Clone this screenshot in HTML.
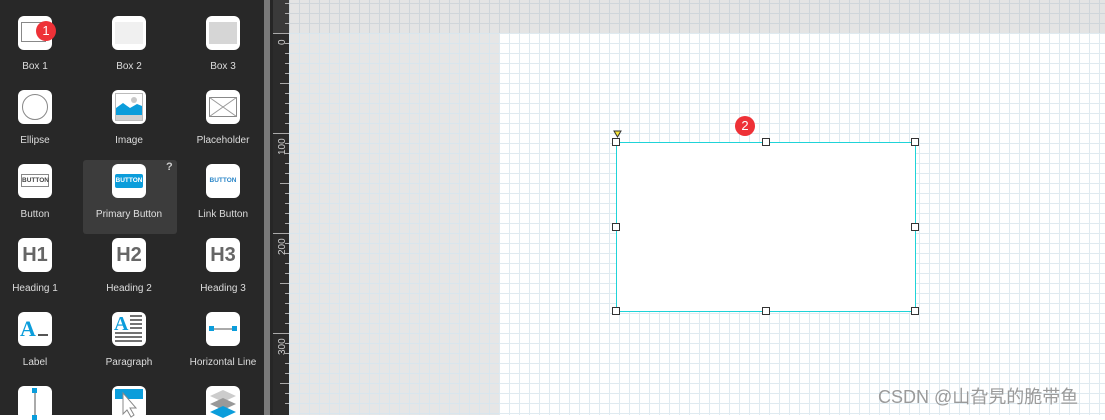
<!DOCTYPE html>
<html><head><meta charset="utf-8"><style>
*{margin:0;padding:0;box-sizing:border-box}
body{width:1105px;height:415px;overflow:hidden;position:relative;background:#fff;font-family:"Liberation Sans",sans-serif}
#side{position:absolute;left:0;top:0;width:264px;height:415px;background:#282828}
#sb1{position:absolute;left:264px;top:0;width:6px;height:415px;background:#7a7a7a}
#sb2{position:absolute;left:270px;top:0;width:3px;height:415px;background:#262626}
.it{position:absolute;width:94px;text-align:center;color:#ddd;font-size:10px}
.ic{position:absolute;width:34px;height:34px;background:#fff;border-radius:6px;left:30px;top:0;overflow:hidden}
.lb{position:absolute;top:45px;left:0;width:94px}
#hl{position:absolute;left:83px;top:160px;width:94px;height:74px;background:#3c3c3c;border-radius:3px}
#top{position:absolute;left:289px;top:0;width:816px;height:33px;background-color:#e4e4e4;
background-image:linear-gradient(90deg,#cfd6db 1px,transparent 1px),linear-gradient(#cfd6db 1px,transparent 1px);background-size:10px 10px;background-position:10px 3px}
#gray{position:absolute;left:289px;top:33px;width:210px;height:382px;background-color:#e6e6e6;
background-image:linear-gradient(90deg,#d8e6ee 1px,transparent 1px),linear-gradient(#d8e6ee 1px,transparent 1px);background-size:10px 10px;background-position:10px 0px}
#white{position:absolute;left:499px;top:33px;width:606px;height:382px;background-color:#fff;
background-image:linear-gradient(90deg,#dfeaf0 1px,transparent 1px),linear-gradient(#dfeaf0 1px,transparent 1px);background-size:10px 10px;background-position:0px 0px}
.h{position:absolute;width:8px;height:8px;background:#fff;border:1px solid #333}
.badge{position:absolute;width:20px;height:20px;border-radius:50%;background:#ee3137;color:#fff;font-size:13px;text-align:center;line-height:20px}
</style></head><body>
<div id="side">
<div id="hl"></div>
<div style="position:absolute;left:166px;top:161px;color:#ccc;font-size:11px;font-weight:bold">?</div>

<div class="it" style="left:-12px;top:16px"><div class="ic"><div style="position:absolute;left:3px;top:6px;width:25px;height:20px;border:1px solid #888"></div></div><div class="lb">Box 1</div></div>
<div class="it" style="left:82px;top:16px"><div class="ic"><div style="position:absolute;left:3px;top:6px;width:28px;height:22px;background:#f0f0f0"></div></div><div class="lb">Box 2</div></div>
<div class="it" style="left:176px;top:16px"><div class="ic"><div style="position:absolute;left:3px;top:6px;width:28px;height:22px;background:#d6d6d6"></div></div><div class="lb">Box 3</div></div>

<div class="it" style="left:-12px;top:90px"><div class="ic"><div style="position:absolute;left:4px;top:4px;width:26px;height:26px;border:1px solid #888;border-radius:50%"></div></div><div class="lb">Ellipse</div></div>
<div class="it" style="left:82px;top:90px"><div class="ic"><svg width="34" height="34"><rect x="3.5" y="3.5" width="27" height="27" fill="#fff" stroke="#bbb"/><rect x="4" y="25" width="26" height="5" fill="#d0d0d0"/><path d="M4 18 L11 13 L18 18 L25 14 L30 16 L30 25 L4 25Z" fill="#0b9ddb"/><circle cx="22" cy="10" r="3" fill="#c8c8c8"/></svg></div><div class="lb">Image</div></div>
<div class="it" style="left:176px;top:90px"><div class="ic"><svg width="34" height="34"><rect x="3.5" y="7.5" width="27" height="19" fill="none" stroke="#888"/><path d="M3.5 7.5 L30.5 26.5 M30.5 7.5 L3.5 26.5" stroke="#999"/></svg></div><div class="lb">Placeholder</div></div>

<div class="it" style="left:-12px;top:164px"><div class="ic"><div style="position:absolute;left:3px;top:10px;width:28px;height:13px;border:1px solid #888;font-size:6.5px;font-weight:bold;color:#444;line-height:11px">BUTTON</div></div><div class="lb">Button</div></div>
<div class="it" style="left:82px;top:164px"><div class="ic"><div style="position:absolute;left:3px;top:10px;width:28px;height:14px;background:#0b9ddb;border-radius:2px;font-size:6.5px;font-weight:bold;color:#fff;line-height:14px">BUTTON</div></div><div class="lb" style="color:#e0e0e0">Primary Button</div></div>
<div class="it" style="left:176px;top:164px"><div class="ic"><div style="position:absolute;left:0;top:10px;width:34px;font-size:6.5px;font-weight:bold;color:#2a86c8;line-height:14px">BUTTON</div></div><div class="lb">Link Button</div></div>

<div class="it" style="left:-12px;top:238px"><div class="ic"><div style="position:absolute;left:0;top:4px;width:34px;font-size:20px;font-weight:bold;color:#666;line-height:26px">H1</div></div><div class="lb">Heading 1</div></div>
<div class="it" style="left:82px;top:238px"><div class="ic"><div style="position:absolute;left:0;top:4px;width:34px;font-size:20px;font-weight:bold;color:#666;line-height:26px">H2</div></div><div class="lb">Heading 2</div></div>
<div class="it" style="left:176px;top:238px"><div class="ic"><div style="position:absolute;left:0;top:4px;width:34px;font-size:20px;font-weight:bold;color:#666;line-height:26px">H3</div></div><div class="lb">Heading 3</div></div>

<div class="it" style="left:-12px;top:312px"><div class="ic"><div style="position:absolute;left:2px;top:4px;font-family:'Liberation Serif',serif;font-size:22px;font-weight:bold;color:#0b9ddb;line-height:26px">A</div><div style="position:absolute;left:20px;top:22px;width:10px;height:2px;background:#555"></div></div><div class="lb">Label</div></div>
<div class="it" style="left:82px;top:312px"><div class="ic"><div style="position:absolute;left:2px;top:1px;font-family:'Liberation Serif',serif;font-size:20px;font-weight:bold;color:#0b9ddb;line-height:22px">A</div><svg width="34" height="34" style="position:absolute;left:0;top:0"><path d="M18 4h12M18 8h12M18 12h12M18 16h12M3 21h27M3 25h27M3 29h27" stroke="#444" stroke-width="1.4"/></svg></div><div class="lb">Paragraph</div></div>
<div class="it" style="left:176px;top:312px"><div class="ic"><svg width="34" height="34"><path d="M5 17h24" stroke="#555"/><rect x="3" y="14" width="5" height="5" fill="#0b9ddb"/><rect x="26" y="14" width="5" height="5" fill="#0b9ddb"/></svg></div><div class="lb">Horizontal Line</div></div>

<div class="it" style="left:-12px;top:386px"><div class="ic"><svg width="34" height="34"><path d="M17 5v28" stroke="#555"/><rect x="14" y="2" width="5" height="5" fill="#0b9ddb"/><rect x="14" y="29" width="5" height="5" fill="#0b9ddb"/></svg></div></div>
<div class="it" style="left:82px;top:386px"><div class="ic"><svg width="34" height="34"><rect x="3" y="3" width="28" height="10" fill="#0b9ddb"/><path d="M11 7 L11 28 L15 24 L19 31 L22 29 L18 22 L24 22Z" fill="#fff" stroke="#888"/></svg></div></div>
<div class="it" style="left:176px;top:386px"><div class="ic"><svg width="34" height="34"><path d="M17 4 L30 10 L17 16 L4 10Z" fill="#ccc"/><path d="M17 12 L30 18 L17 24 L4 18Z" fill="#999"/><path d="M17 20 L30 26 L17 32 L4 26Z" fill="#0b9ddb"/></svg></div></div>

<div class="badge" style="left:36px;top:21px">1</div>
</div>
<div id="sb1"></div><div id="sb2"></div>

<svg style="position:absolute;left:273px;top:0" width="16" height="415">
<rect width="16" height="415" fill="#2b2b2b"/>
<rect x="0" y="0" width="16" height="33" fill="#3a3a3a"/>
<g stroke="#aaa" stroke-width="1">
<path d="M0 33.5h16M0 133.5h16M0 233.5h16M0 333.5h16"/>
<path d="M12 3.5h4M12 13.5h4M12 23.5h4M12 43.5h4M12 53.5h4M12 63.5h4M12 73.5h4M12 93.5h4M12 103.5h4M12 113.5h4M12 123.5h4M12 143.5h4M12 153.5h4M12 163.5h4M12 173.5h4M12 193.5h4M12 203.5h4M12 213.5h4M12 223.5h4M12 243.5h4M12 253.5h4M12 263.5h4M12 273.5h4M12 293.5h4M12 303.5h4M12 313.5h4M12 323.5h4M12 343.5h4M12 353.5h4M12 363.5h4M12 373.5h4M12 393.5h4M12 403.5h4"/>
<path d="M7 83.5h9M7 183.5h9M7 283.5h9M7 383.5h9"/>
</g>
<g fill="#ccc" font-size="10" font-family="Liberation Sans,sans-serif">
<text transform="translate(12,45) rotate(-90)">0</text>
<text transform="translate(12,155) rotate(-90)">100</text>
<text transform="translate(12,255) rotate(-90)">200</text>
<text transform="translate(12,355) rotate(-90)">300</text>
</g>
</svg>

<div id="top"></div>
<div id="gray"></div>
<div id="white"></div>

<div style="position:absolute;left:616px;top:142px;width:300px;height:170px;background:#fff;border:1px solid #1fd3d8"></div>
<div class="h" style="left:612px;top:138px"></div>
<div class="h" style="left:762px;top:138px"></div>
<div class="h" style="left:911px;top:138px"></div>
<div class="h" style="left:612px;top:223px"></div>
<div class="h" style="left:911px;top:223px"></div>
<div class="h" style="left:612px;top:307px"></div>
<div class="h" style="left:762px;top:307px"></div>
<div class="h" style="left:911px;top:307px"></div>
<svg style="position:absolute;left:613px;top:130px" width="10" height="9"><path d="M1 1h7L4.5 7Z" fill="#f5e33a" stroke="#333"/></svg>
<div class="badge" style="left:735px;top:116px">2</div>

<div style="position:absolute;left:878px;top:383px;font-size:18px;color:#9a9a9a;font-family:'Liberation Sans','Noto Sans CJK SC',sans-serif;white-space:nowrap">CSDN @山旮旯的脆带鱼</div>
</body></html>
